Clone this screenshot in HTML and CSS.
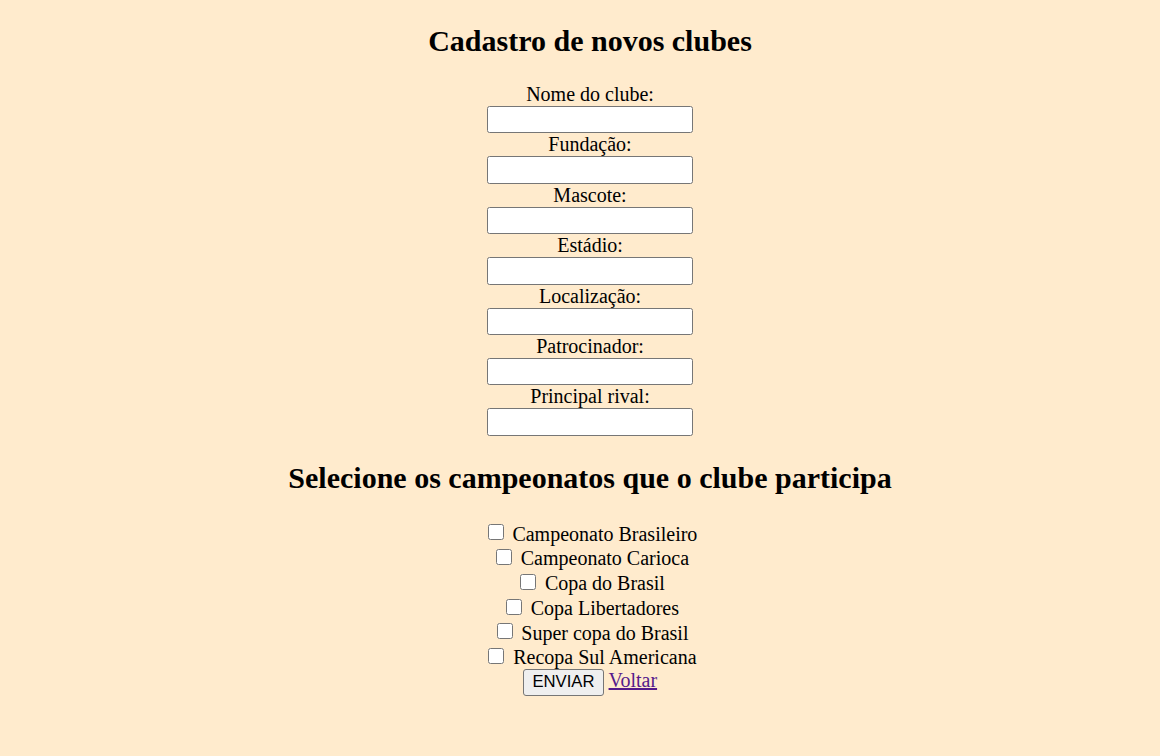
FILE: index.html
```html
<!DOCTYPE html>
<html lang="pt-BR">
<head>
<meta charset="utf-8">
<title>Cadastro de novos clubes</title>
<link rel="stylesheet" href="styles.css">
</head>
<body class="page">
<h2 class="title title-top">Cadastro de novos clubes</h2>
<form class="club-form">
<label class="field-label" for="nome">Nome do clube:</label><br>
<input class="text-input" type="text" id="nome"><br>
<label class="field-label" for="fundacao">Fundação:</label><br>
<input class="text-input" type="text" id="fundacao"><br>
<label class="field-label" for="mascote">Mascote:</label><br>
<input class="text-input" type="text" id="mascote"><br>
<label class="field-label" for="estadio">Estádio:</label><br>
<input class="text-input" type="text" id="estadio"><br>
<label class="field-label" for="local">Localização:</label><br>
<input class="text-input" type="text" id="local"><br>
<label class="field-label" for="patro">Patrocinador:</label><br>
<input class="text-input" type="text" id="patro"><br>
<label class="field-label" for="rival">Principal rival:</label><br>
<input class="text-input" type="text" id="rival"><br>

<h2 class="title title-champ">Selecione os campeonatos que o clube participa</h2>
<input class="check" type="checkbox"> Campeonato Brasileiro<br>
<input class="check" type="checkbox"> Campeonato Carioca<br>
<input class="check" type="checkbox"> Copa do Brasil<br>
<input class="check" type="checkbox"> Copa Libertadores<br>
<input class="check" type="checkbox"> Super copa do Brasil<br>
<input class="check" type="checkbox"> Recopa Sul Americana<br>
<button class="send-btn" type="button">ENVIAR</button> <a class="back-link" href="#">Voltar</a>
</form>
</body>
</html>
```
FILE: styles.css
```css
html {
  background: #ffebcd;
}

.page {
  margin: 10px 0 10px 20px;
  background: #ffebcd;
  color: #000;
  font-family: "Liberation Serif", "Times New Roman", serif;
  font-size: 20px;
  text-align: center;
}

.title {
  font-size: 30px;
  font-weight: bold;
  margin: 25px 0;
}

.title-top {
  margin-top: 14px;
}

.title-champ {
  margin-bottom: 26px;
}

.club-form {
  margin: 0;
}

.field-label {
  font-size: 20px;
}

.text-input {
  box-sizing: border-box;
  width: 206px;
  height: 27.4px;
  margin: 0;
  padding: 1px 2.5px;
  border: 1px solid #767676;
  border-radius: 2.5px;
  background: #fff;
  font-family: "Liberation Sans", Arial, sans-serif;
  font-size: 16.67px;
}

.check {
  width: 16px;
  height: 16px;
  margin: 3.75px 3.75px 3.75px 5px;
  vertical-align: baseline;
}

.send-btn {
  box-sizing: border-box;
  height: 26.5px;
  margin: 0;
  padding: 1px 8.5px;
  border: 1px solid #767676;
  border-radius: 3px;
  background: #efefef;
  color: #000;
  font-family: "Liberation Sans", Arial, sans-serif;
  font-size: 16.67px;
}

.back-link {
  color: #551a8b;
  text-decoration: underline;
}
```
